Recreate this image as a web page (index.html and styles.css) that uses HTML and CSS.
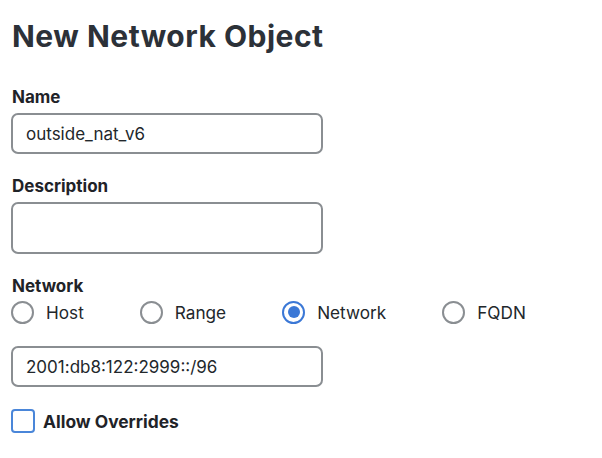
FILE: index.html
```html
<!DOCTYPE html>
<html lang="en">
<head>
<meta charset="utf-8">
<title>New Network Object</title>
<link rel="stylesheet" href="styles.css">
</head>
<body>
<main class="form">
  <h1 class="title">New Network Object</h1>

  <div class="field field-name">
    <label class="label" for="name">Name</label>
    <input class="text-input" id="name" type="text" value="outside_nat_v6">
  </div>

  <div class="field">
    <label class="label" for="desc">Description</label>
    <input class="text-input text-input-tall" id="desc" type="text" value="">
  </div>

  <div class="field">
    <div class="label label-group">Network</div>
    <div class="radio-row">
      <label class="radio"><span class="radio-dot"></span><span>Host</span></label>
      <label class="radio"><span class="radio-dot"></span><span>Range</span></label>
      <label class="radio"><span class="radio-dot is-checked"></span><span>Network</span></label>
      <label class="radio"><span class="radio-dot"></span><span>FQDN</span></label>
    </div>
  </div>

  <div class="field">
    <input class="text-input" type="text" value="2001:db8:122:2999::/96">
  </div>

  <label class="checkbox">
    <span class="checkbox-box"></span>
    <span class="checkbox-label">Allow Overrides</span>
  </label>
</main>
</body>
</html>
```

FILE: styles.css
```css
html, body {
  margin: 0;
  padding: 0;
  background: #ffffff;
}

body {
  font-family: Inter, "Liberation Sans", sans-serif;
  color: #1f2328;
}

.form {
  padding: 18px 0 0 11px;
  width: 312px;
  display: flex;
  flex-direction: column;
}

.title {
  margin: 0 0 0 1px;
  font-size: 30px;
  line-height: 36px;
  font-weight: 700;
  color: #2c3138;
  letter-spacing: 0.5px;
  white-space: nowrap;
}

.field {
  display: flex;
  flex-direction: column;
  margin-top: 22px;
}

.field-name {
  margin-top: 33px;
}

.label {
  font-size: 17px;
  line-height: 20px;
  font-weight: 700;
  color: #1f2328;
  margin: 0 0 6px 1px;
}

.label-group {
  margin-bottom: 4px;
}

.text-input {
  box-sizing: border-box;
  width: 312px;
  height: 41px;
  margin: 0;
  padding: 0 0 0 13px;
  border: 2px solid #8a8e92;
  border-radius: 7px;
  font-family: Inter, "Liberation Sans", sans-serif;
  font-size: 17px;
  color: #22272b;
  background: #ffffff;
  outline: none;
}

.text-input-tall {
  height: 52px;
}

.radio-row {
  display: flex;
  gap: 56px;
  white-space: nowrap;
}

.radio {
  display: flex;
  flex-shrink: 0;
  align-items: center;
  gap: 12px;
  height: 24px;
  font-size: 17.2px;
  color: #22272b;
}

.radio-dot {
  box-sizing: border-box;
  width: 23px;
  height: 23px;
  border: 2px solid #8a8e92;
  border-radius: 50%;
  display: flex;
  align-items: center;
  justify-content: center;
}

.radio-dot.is-checked {
  border-color: #3b78d6;
}

.radio-dot.is-checked::after {
  content: "";
  width: 12px;
  height: 12px;
  border-radius: 50%;
  background: #3b78d6;
}

.checkbox {
  display: flex;
  align-items: center;
  gap: 8px;
  margin-top: 22px;
  height: 24px;
}

.checkbox-box {
  box-sizing: border-box;
  width: 24px;
  height: 24px;
  border: 2px solid #4a86d9;
  border-radius: 4px;
}

.checkbox-label {
  font-size: 17.4px;
  font-weight: 700;
  color: #1f2328;
}
```
